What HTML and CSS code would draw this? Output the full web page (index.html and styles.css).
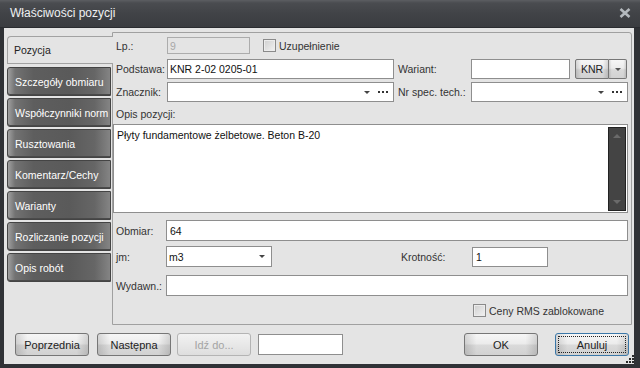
FILE: index.html
```html
<!DOCTYPE html>
<html lang="pl">
<head>
    <meta charset="UTF-8">
    <title>Właściwości pozycji</title>
    <link rel="stylesheet" href="styles.css">
</head>
<body>
    <div class="window">
        <div class="titlebar">
            <span class="title">Właściwości pozycji</span>
            <svg class="close" width="12" height="10" viewBox="0 0 12 10">
                <path d="M1.5 1 L10.5 9 M10.5 1 L1.5 9" stroke="#b4b9be" stroke-width="2.6" />
            </svg>
        </div>

        <div class="body">
            <div class="main">
                <div class="tabs">
                    <div class="tab active">Pozycja</div>
                    <div class="tab">Szczegóły obmiaru</div>
                    <div class="tab">Współczynniki norm</div>
                    <div class="tab">Rusztowania</div>
                    <div class="tab">Komentarz/Cechy</div>
                    <div class="tab">Warianty</div>
                    <div class="tab">Rozliczanie pozycji</div>
                    <div class="tab">Opis robót</div>
                </div>

                <div class="panel">
                    <div class="row row-lp">
                        <span class="lbl">Lp.:</span>
                        <div class="field disabled lp">9</div>
                        <span class="check"></span>
                        <span class="check-text">Uzupełnienie</span>
                    </div>

                    <div class="row row-20 gap-5">
                        <span class="lbl">Podstawa:</span>
                        <div class="field main-field">KNR 2-02 0205-01</div>
                        <span class="lbl lbl-right">Wariant:</span>
                        <div class="field wariant"></div>
                        <div class="btn knr">KNR</div>
                        <div class="btn knr-drop"><span class="arrow"></span></div>
                    </div>

                    <div class="row row-20 gap-3">
                        <span class="lbl">Znacznik:</span>
                        <div class="field combo main-field">
                            <span class="arrow"></span>
                            <span class="dots"><i></i><i></i><i></i></span>
                        </div>
                        <span class="lbl lbl-right">Nr spec. tech.:</span>
                        <div class="field combo grow">
                            <span class="arrow"></span>
                            <span class="dots"><i></i><i></i><i></i></span>
                        </div>
                    </div>

                    <div class="row row-opis">
                        <span class="lbl">Opis pozycji:</span>
                    </div>

                    <div class="memo">
                        <div class="memo-text">Płyty fundamentowe żelbetowe. Beton B-20</div>
                        <div class="scroll">
                            <span class="up"></span>
                            <span class="down"></span>
                        </div>
                    </div>

                    <div class="row row-21 gap-7">
                        <span class="lbl lbl-short">Obmiar:</span>
                        <div class="field grow pad-3">64</div>
                    </div>

                    <div class="row row-21 gap-5">
                        <span class="lbl lbl-short">jm:</span>
                        <div class="field combo jm">
                            <span>m3</span>
                            <span class="arrow"></span>
                        </div>
                        <span class="lbl krot-lbl">Krotność:</span>
                        <div class="field krot pad-3">1</div>
                    </div>

                    <div class="row row-21 gap-8">
                        <span class="lbl lbl-short">Wydawn.:</span>
                        <div class="field grow"></div>
                    </div>

                    <div class="row row-rms">
                        <span class="check"></span>
                        <span class="check-text">Ceny RMS zablokowane</span>
                    </div>
                </div>
            </div>

            <div class="footer">
                <div class="btn fbtn">Poprzednia</div>
                <div class="btn fbtn">Następna</div>
                <div class="btn fbtn off">Idź do...</div>
                <div class="field goto"></div>
                <div class="btn fbtn ok">OK</div>
                <div class="btn fbtn focus"><span>Anuluj</span></div>
            </div>
        </div>

        <svg class="grip" width="10" height="10" viewBox="0 0 10 10">
            <rect x="7" y="1" width="2" height="2" fill="#2a2a2a" />
            <rect x="4" y="4" width="2" height="2" fill="#2a2a2a" />
            <rect x="7" y="4" width="2" height="2" fill="#2a2a2a" />
            <rect x="1" y="7" width="2" height="2" fill="#2a2a2a" />
            <rect x="4" y="7" width="2" height="2" fill="#2a2a2a" />
            <rect x="7" y="7" width="2" height="2" fill="#2a2a2a" />
        </svg>
    </div>
</body>
</html>
```

FILE: styles.css
```css
body {
    margin: 0;
    font-family: "Liberation Sans", Arial, sans-serif;
    font-size: 10.5px;
    color: #222;
    background: #323438;
}
.window {
    width: 640px;
    height: 368px;
    background: #303236;
    display: flex;
    flex-direction: column;
    position: relative;
}
.titlebar {
    height: 28px;
    flex: none;
    box-sizing: border-box;
    padding: 0 9px 2px 10px;
    display: flex;
    align-items: center;
    justify-content: space-between;
    background: linear-gradient(#5c5e62, #4a4c50 3px, #414347 50%, #3a3c40);
    border-bottom: 1px solid #2a2c30;
    color: #eef0f2;
    font-size: 12px;
}
.body {
    flex: 1;
    margin: 0 6px 4px 4px;
    padding: 4px 2px 0 3px;
    background: #e4e4e4;
    display: flex;
    flex-direction: column;
}
.main {
    display: flex;
    height: 293px;
}

/* tabs */
.tabs {
    width: 105px;
    flex: none;
    display: flex;
    flex-direction: column;
    gap: 2px;
    padding-top: 4px;
}
.tab {
    width: 104px;
    height: 29px;
    box-sizing: border-box;
    padding-left: 7px;
    display: flex;
    align-items: center;
    white-space: nowrap;
    overflow: hidden;
    color: #fff;
    border: 1px solid #444;
    border-radius: 3px 0 0 3px;
    background: linear-gradient(to right, #a0a0a0 0, #727272 7%, #5e5e5e 25%, #5a5a5a 60%, #666 85%, #848484 100%);
    box-shadow: inset 0 -1px 0 #4a4a4a;
}
.tab.active {
    position: relative;
    z-index: 1;
    width: 106px;
    height: 28px;
    margin-bottom: 1px;
    padding-left: 6px;
    color: #222;
    background: #e4e4e4;
    border: 1px solid #a2a2a2;
    border-right: none;
    border-radius: 4px 0 0 0;
    box-shadow: none;
}

/* panel */
.panel {
    flex: 1;
    box-sizing: border-box;
    border: 1px solid #a0a0a0;
    border-radius: 0 3px 0 0;
    padding: 4px 3px 0 3px;
}
.row {
    display: flex;
    align-items: center;
}
.row-lp { height: 17px; }
.row-20 { height: 20px; }
.row-21 { height: 21px; }
.gap-3 { margin-top: 3px; }
.gap-5 { margin-top: 5px; }
.gap-7 { margin-top: 7px; }
.gap-8 { margin-top: 8px; }
.row-opis {
    height: 20px;
    margin-top: 2px;
}
.lbl {
    flex: none;
    width: 51px;
    color: #333;
    white-space: nowrap;
}
.lbl-short { width: 50px; }
.lbl-right {
    width: 73px;
    padding-left: 4px;
}
.krot-lbl {
    width: 71px;
    margin-left: 129px;
}

/* inputs */
.field {
    box-sizing: border-box;
    height: 100%;
    background: #fff;
    border: 1px solid #8e8e8e;
    padding-left: 2px;
    display: flex;
    align-items: center;
    white-space: nowrap;
    color: #111;
}
.pad-3 { padding-left: 3px; }
.grow { flex: 1; }
.field.disabled {
    background: #e4e4e4;
    border-color: #acacac;
    color: #a8a8a8;
}
.lp { width: 83px; }
.main-field { width: 227px; flex: none; }
.wariant { width: 99px; flex: none; }
.jm { width: 106px; flex: none; }
.krot { width: 76px; height: 20px; flex: none; }
.combo { position: relative; }
.arrow {
    width: 0;
    height: 0;
    border-left: 3px solid transparent;
    border-right: 3px solid transparent;
    border-top: 3px solid #444;
}
.combo .arrow {
    margin-left: auto;
    margin-right: 8px;
}
.dots {
    display: flex;
    gap: 2px;
    margin-right: 5px;
}
.dots i {
    width: 2px;
    height: 2px;
    background: #333;
}
.jm .arrow { margin-right: 6px; }

/* checkbox */
.check {
    width: 13px;
    height: 13px;
    box-sizing: border-box;
    flex: none;
    border: 1px solid #8a8a8a;
    background: linear-gradient(135deg, #cfcfcf, #f2f2f2);
    box-shadow: inset 0 0 0 1px #ececec;
}
.row-lp .check { margin-left: 13px; }
.check-text {
    margin-left: 3px;
    color: #333;
}
.row-rms {
    height: 15px;
    margin-top: 7px;
    padding-left: 357px;
}

/* description memo */
.memo {
    margin-left: -3px;
    height: 89px;
    box-sizing: border-box;
    border: 1px solid #8e8e8e;
    background: #fff;
    display: flex;
}
.memo-text {
    flex: 1;
    padding: 3px 0 0 3px;
    line-height: 14px;
    color: #111;
}
.scroll {
    width: 18px;
    margin: 2px 1px 1px 0;
    box-sizing: border-box;
    background: #444;
    border: 1px solid #222;
    display: flex;
    flex-direction: column;
    justify-content: space-between;
    align-items: center;
    padding: 6px 0 6px;
}
.scroll .up,
.scroll .down {
    width: 0;
    height: 0;
    border-left: 4px solid transparent;
    border-right: 4px solid transparent;
}
.scroll .up { border-bottom: 4px solid #6a6a6a; }
.scroll .down { border-top: 4px solid #6a6a6a; }

/* buttons */
.btn {
    box-sizing: border-box;
    display: flex;
    align-items: center;
    justify-content: center;
    border: 1px solid #767676;
    border-radius: 3px;
    color: #222;
    background:
        linear-gradient(to right, rgba(0,0,0,.13), rgba(0,0,0,0) 16%, rgba(0,0,0,0) 84%, rgba(0,0,0,.13)),
        linear-gradient(#f6f6f6, #ececec 45%, #d9d9d9 55%, #d2d2d2);
}
.knr {
    width: 34px;
    height: 20px;
    margin-left: 5px;
    border-radius: 2px 0 0 2px;
}
.knr-drop {
    width: 18px;
    height: 20px;
    border-left: none;
    border-radius: 0 2px 2px 0;
}
.knr-drop .arrow { border-top-color: #555; }

.footer {
    display: flex;
    align-items: center;
    margin-top: 8px;
    padding: 0 3px 0 8px;
}
.fbtn {
    width: 74px;
    height: 23px;
    flex: none;
    font-size: 11px;
}
.fbtn + .fbtn { margin-left: 8px; }
.fbtn.off {
    margin-left: 6px;
    color: #a4a4a4;
    border-color: #b4b4b4;
    background: linear-gradient(#f2f2f2, #e8e8e8 50%, #dedede);
}
.goto {
    width: 85px;
    height: 21px;
    margin-left: 7px;
    flex: none;
}
.fbtn.ok { margin-left: auto; }
.fbtn.focus {
    margin-left: 17px;
    border-color: #3a77a8;
}
.fbtn.focus span {
    display: flex;
    align-items: center;
    justify-content: center;
    width: 66px;
    height: 15px;
    border: 1px dotted #222;
}

.grip {
    position: absolute;
    right: 5px;
    bottom: 4px;
}
```
